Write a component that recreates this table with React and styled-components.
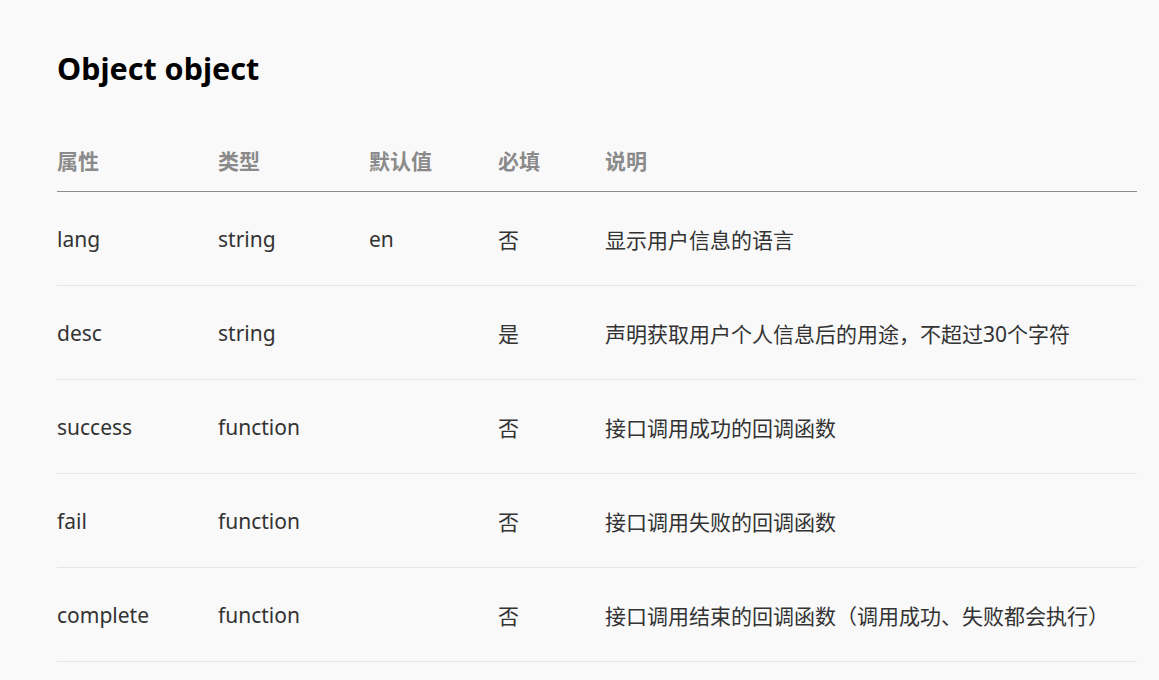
import React from "react";
import styled, { createGlobalStyle } from "styled-components";

const Global = createGlobalStyle`
  html, body { margin: 0; padding: 0; background: #f9f9f9; }
  body { font-family: "Noto Sans", "Noto Sans CJK SC", sans-serif; color: #333; }
`;

const Page = styled.div`
  padding: 48px 22px 0 57px;
`;

const Title = styled.h2`
  margin: 0;
  font-size: 30.5px;
  line-height: 40px;
  font-weight: 700;
  color: #000;
`;

const Table = styled.div`
  margin-top: 41px;
  width: 1080px;
`;

const Row = styled.div`
  display: grid;
  grid-template-columns: 161px 151px 129px 107px 1fr;
  align-items: center;
  height: ${(p) => (p.$head ? "62px" : "93px")};
  border-bottom: 1px solid ${(p) => (p.$head ? "#8c8c8c" : "#e6e6e6")};
`;

const Cell = styled.div`
  font-size: 21px;
  font-weight: ${(p) => (p.$head ? 700 : 400)};
  color: ${(p) => (p.$head ? "#8a8a8a" : "#333")};
  white-space: nowrap;
`;

const head = ["属性", "类型", "默认值", "必填", "说明"];
const rows = [
  ["lang", "string", "en", "否", "显示用户信息的语言"],
  ["desc", "string", "", "是", "声明获取用户个人信息后的用途，不超过30个字符"],
  ["success", "function", "", "否", "接口调用成功的回调函数"],
  ["fail", "function", "", "否", "接口调用失败的回调函数"],
  ["complete", "function", "", "否", "接口调用结束的回调函数（调用成功、失败都会执行）"],
];

export default function App() {
  return (
    <>
      <Global />
      <Page>
        <Title>Object object</Title>
        <Table>
          <Row $head>
            {head.map((h) => (
              <Cell $head key={h}>{h}</Cell>
            ))}
          </Row>
          {rows.map((r) => (
            <Row key={r[0]}>
              {r.map((c, i) => (
                <Cell key={i}>{c}</Cell>
              ))}
            </Row>
          ))}
        </Table>
      </Page>
    </>
  );
}
